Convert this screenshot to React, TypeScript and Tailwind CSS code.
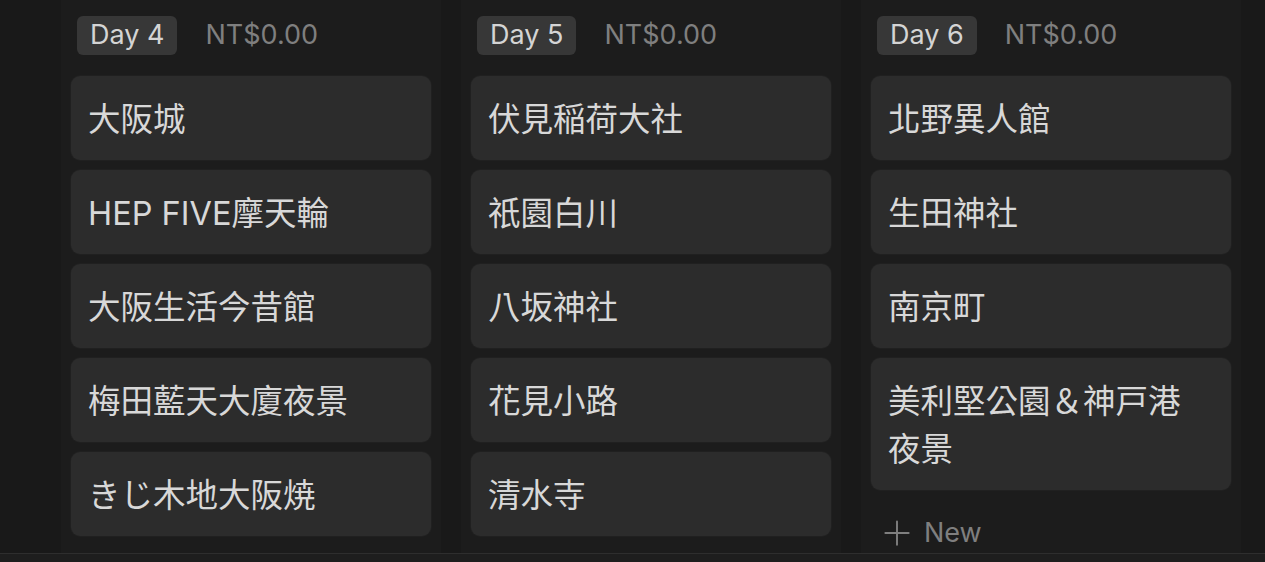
import { Plus } from "lucide-react";

type Column = {
  day: string;
  total: string;
  items: string[];
  showNew?: boolean;
};

const columns: Column[] = [
  {
    day: "Day 4",
    total: "NT$0.00",
    items: ["大阪城", "HEP FIVE摩天輪", "大阪生活今昔館", "梅田藍天大廈夜景", "きじ木地大阪焼"],
  },
  {
    day: "Day 5",
    total: "NT$0.00",
    items: ["伏見稲荷大社", "祇園白川", "八坂神社", "花見小路", "清水寺"],
  },
  {
    day: "Day 6",
    total: "NT$0.00",
    items: ["北野異人館", "生田神社", "南京町", "美利堅公園＆神戸港夜景"],
    showNew: true,
  },
];

function BoardColumn({ col }: { col: Column }) {
  return (
    <div className="flex w-[380px] shrink-0 flex-col bg-[#1c1c1c] px-[10px]">
      {/* Group header */}
      <div className="mt-[16px] flex h-[39px] items-center gap-[28px] pl-[6px]">
        <span className="flex h-[39px] items-center rounded-[6px] bg-[#373737] px-[13px] text-[27px] text-[#d4d4d4]">
          {col.day}
        </span>
        <span className="text-[27px] text-[#7f7f7f]">{col.total}</span>
      </div>

      {/* Cards */}
      <div className="mt-[21px] flex flex-col gap-[10px]">
        {col.items.map((item) => (
          <div
            key={item}
            className="rounded-[9px] bg-[#2c2c2c] pb-[16px] pl-[17px] pr-[26px] pt-[20px] text-[32.5px] leading-[48px] text-[#d8d8d8] shadow-[0_0_0_1px_rgba(255,255,255,0.02)]"
          >
            {item}
          </div>
        ))}
      </div>

      {col.showNew && (
        <div className="mt-[23px] flex items-center gap-[7px] pl-[6px] text-[#7f7f7f]">
          <Plus size={40} strokeWidth={1.15} />
          <span className="text-[27px]">New</span>
        </div>
      )}
    </div>
  );
}

export default function App() {
  return (
    <div
      className="flex h-[562px] w-[1265px] flex-col overflow-hidden bg-[#191919]"
      style={{ fontFamily: 'Inter, "Noto Sans CJK TC", "Noto Sans CJK JP", sans-serif' }}
    >
      <div className="flex h-[553px] gap-[20px] overflow-hidden pl-[61px]">
        {columns.map((col) => (
          <BoardColumn key={col.day} col={col} />
        ))}
      </div>
      <div className="h-px bg-[#2e2e2e]" />
      <div className="flex-1 bg-[#1e1e1e]" />
    </div>
  );
}
